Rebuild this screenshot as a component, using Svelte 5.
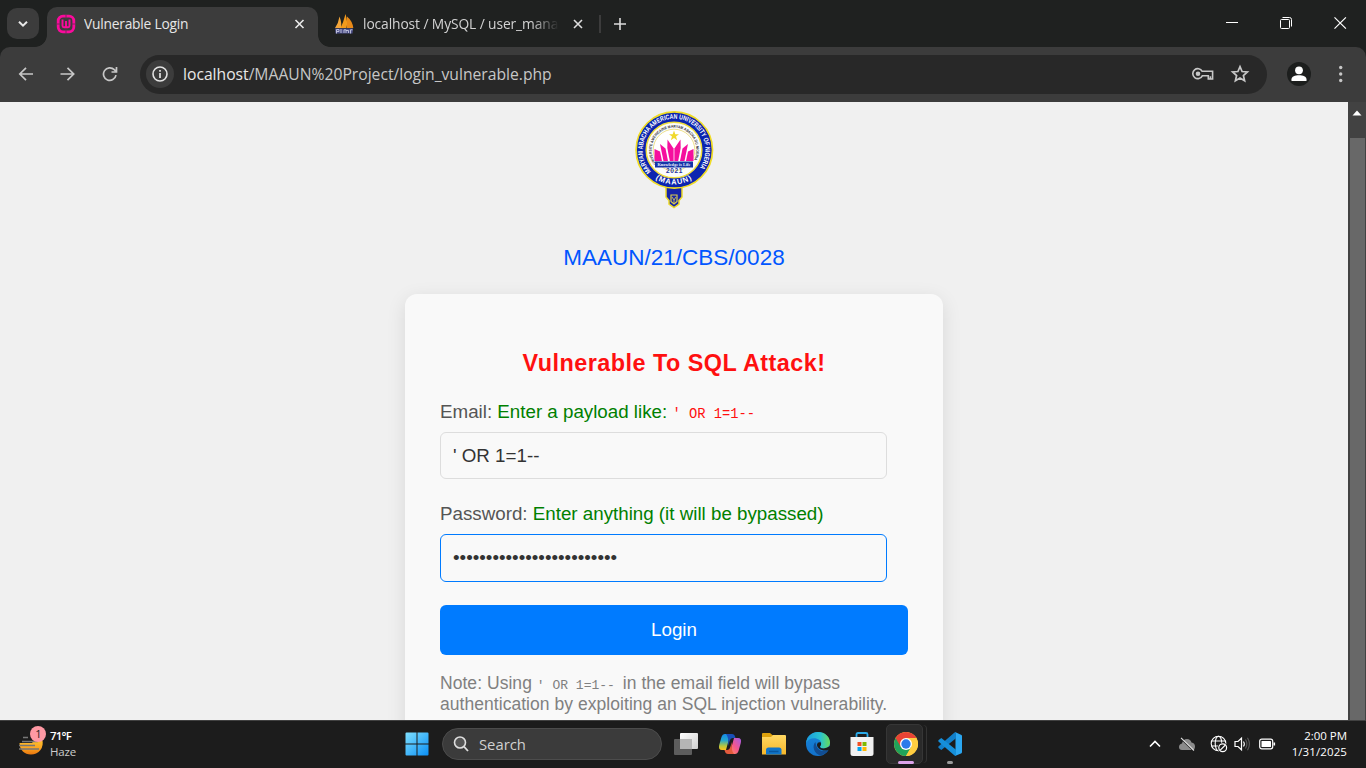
<script>
  const username = "' OR 1=1--";
  const dots = '•'.repeat(25);
</script>

<div class="screen">
  <header class="tabstrip">
    <button class="tab-search" aria-label="Search tabs">
      <svg width="12" height="12" viewBox="0 0 12 12"><path d="M2 3.7 6 7.7 10 3.7" fill="none" stroke="#e8e8e8" stroke-width="2" /></svg>
    </button>
    <div class="tab active">
      <svg class="fav" width="20" height="20" viewBox="0 0 20 20">
        <rect x="2.200" y="2.200" width="15.600" height="15.600" rx="4.800" fill="none" stroke="#fb0a9c" stroke-width="2.800" />
        <path d="M10 0V4.500M10 15.500V20M0 10H4.500M15.500 10H20" stroke="#6b2c55" stroke-width="0.9" />
        <path d="M6.500 5.500V11.800Q6.500 13.300 8 13.300H12Q13.500 13.300 13.500 11.800V5.500M10 7V12.500" fill="none" stroke="#fb0a9c" stroke-width="1.9" />
      </svg>
      <span class="tab-title t1">Vulnerable Login</span>
      <svg class="close" width="12" height="12" viewBox="0 0 12 12"><path d="M1.500 2 9.500 10M9.500 2 1.500 10" stroke="#ececec" stroke-width="1.6" /></svg>
    </div>
    <div class="tab idle">
      <svg class="fav2" width="20" height="20" viewBox="0 0 20 20">
        <path d="M1 14Q4.500 9 5.500 2.500Q8 9 7 14Z" fill="#f4a63a" />
        <path d="M6.500 14Q9.500 8 11.500 0Q14 8 12.500 14Z" fill="#f39a1c" />
        <path d="M13 14V2.500Q18.500 7 19.300 14Z" fill="#e98a18" />
        <path d="M1 14.500H19L18.500 19.500H1.500Z" fill="#4d5087" />
        <path d="M2.500 19.500V15.500H5V17.500H2.500M7 15V19M10 19V15.800H12V19M12 16.500H14.500V19M16.500 19.500V15.800H18.500" fill="none" stroke="#c4c6e0" stroke-width=".9" />
      </svg>
      <span class="tab-title t2">localhost / MySQL / user_manage</span>
      <svg class="close" width="12" height="12" viewBox="0 0 12 12"><path d="M2 2 10 10M10 2 2 10" stroke="#dedede" stroke-width="1.6" /></svg>
    </div>
    <i class="sep"></i>
    <svg class="plus" width="14" height="14" viewBox="0 0 14 14"><path d="M7 1V13M1 7H13" stroke="#dcdcdc" stroke-width="1.6" /></svg>
    <div class="wincontrols">
      <svg width="12" height="14" viewBox="0 0 12 14"><path d="M0 6.500H12" stroke="#fff" /></svg>
      <svg width="14" height="14" viewBox="0 0 14 14"><rect x="1.500" y="3.500" width="9" height="9" rx="1" fill="none" stroke="#fff" /><path d="M3.500 1.500H10.500Q12.500 1.500 12.500 3.500V10.500" fill="none" stroke="#fff" /></svg>
      <svg width="14" height="14" viewBox="0 0 14 14"><path d="M.5 1.300 11.900 12.700M11.900 1.300 .5 12.700" stroke="#fff" stroke-width="1.200" /></svg>
    </div>
  </header>

  <nav class="toolbar">
    <svg class="nav" width="16" height="16" viewBox="0 0 16 16"><path d="M15 8H2M8 1.800 1.800 8 8 14.200" fill="none" stroke="#c7c7c7" stroke-width="1.700" /></svg>
    <svg class="nav" width="16" height="16" viewBox="0 0 16 16"><path d="M.5 8H13.500M7.500 1.800 13.700 8 7.500 14.200" fill="none" stroke="#c7c7c7" stroke-width="1.700" /></svg>
    <svg class="nav" width="16" height="16" viewBox="0 0 16 16"><path d="M14 9.200A6.300 6.300 0 1 1 12.300 3.700L14.500 5.800M14.500 1V6H9.500" fill="none" stroke="#c7c7c7" stroke-width="1.700" /></svg>
    <div class="omnibox">
      <span class="info"><svg width="18" height="18" viewBox="0 0 18 18"><circle cx="9" cy="9" r="7" fill="none" stroke="#e3e3e3" stroke-width="1.600" /><path d="M9 8V13M9 5V6.700" stroke="#e3e3e3" stroke-width="1.700" /></svg></span>
      <span class="url"><b>localhost</b>/MAAUN%20Project/login_vulnerable.php</span>
      <svg class="key" width="22" height="14" viewBox="0 0 22 14"><path d="M10.200 4.300H20.600V12H16.300V8.800H10.300A5 5 0 1 1 10.200 4.300ZM18.400 9.300V12" fill="none" stroke="#c7c7c7" stroke-width="1.600" /><circle cx="6" cy="6.700" r="2.300" fill="#c7c7c7" /></svg>
      <svg class="star" width="20" height="20" viewBox="0 0 20 20"><path d="M10 2.600 12.100 7.500 17.400 8 13.400 11.500 14.600 16.800 10 14 5.400 16.800 6.600 11.500 2.600 8 7.900 7.500Z" fill="none" stroke="#c7c7c7" stroke-width="1.700" /></svg>
    </div>
    <svg class="profile" width="24" height="24" viewBox="0 0 24 24"><circle cx="12" cy="12" r="12" fill="#1c1e1d" /><circle cx="12" cy="8.300" r="3.900" fill="#fff" /><path d="M4.500 19V17.200C4.500 14.500 8 13.300 12 13.300S19.500 14.500 19.500 17.200V19Z" fill="#fff" /></svg>
    <svg class="menu" width="6" height="20" viewBox="0 0 6 20"><g fill="#c7c7c7"><circle cx="2.700" cy="3.500" r="1.700" /><circle cx="2.700" cy="10" r="1.700" /><circle cx="2.700" cy="16.500" r="1.700" /></g></svg>
  </nav>

  <div class="viewport">
    <main>
      <svg class="crest" width="80" height="100" viewBox="0 0 80 100">
        <defs>
          <path id="ring-top" d="M17.100 61.400A31.300 31.300 0 1 1 62.900 61.400" />
          <path id="ring-in" d="M22.200 53.400A22.300 22.300 0 1 1 57.800 53.400" />
          <path id="ring-bottom" d="M14 62.500A34.400 34.400 0 0 0 66 62.500" />
        </defs>
        <path d="M32 77H48V87L45 90.500V94L40 97.500 35 94V90.500L32 87Z" fill="#1724a8" stroke="#ecd928" stroke-width="1.500" />
        <path d="M37 85H43V91.500L40 94 37 91.500Z" fill="none" stroke="#d9cb4c" stroke-width="1.200" />
        <path d="M38 87 40 90 42 87M40 90V93" fill="none" stroke="#d9cb4c" stroke-width=".9" />
        <circle cx="40.300" cy="40" r="38.200" fill="#0b24b0" stroke="#f0dc25" stroke-width="1.700" />
        <circle cx="40" cy="40" r="27.800" fill="#fbfbfb" stroke="#efdd3c" stroke-width="1.500" />
        <circle cx="40" cy="40" r="20.800" fill="#fff" stroke="#e6d45d" stroke-width=".7" />
        <text class="crest-ring" textLength="140" lengthAdjust="spacingAndGlyphs"><textPath href="#ring-top" textLength="140" lengthAdjust="spacingAndGlyphs">MARYAM ABACHA AMERICAN UNIVERSITY OF NIGERIA</textPath></text>
        <text class="crest-inner"><textPath href="#ring-in" textLength="94" lengthAdjust="spacingAndGlyphs">UNIVERSITE AMERICAINE MARYAM ABACHA DU NIGERIA</textPath></text>
        <text class="crest-name"><textPath href="#ring-bottom" startOffset="50%" text-anchor="middle">(MAAUN)</textPath></text>
        <path d="M40 20.500 41.300 24.200H45L42 26.500 43.200 30.300 40 28 36.800 30.300 38 26.500 35 24.200H38.700Z" fill="#f0d92b" />
        <g fill="#f50f9e">
          <path d="M20.500 39 26 41.500 28 51H20.500Z" /><path d="M26 34 31.500 38.500 34 51H29.500Z" />
          <path d="M33.500 29.500 39.600 38.500V51H35.800L33.300 38Z" /><path d="M46.500 29.500 40.400 38.500V51H44.200L46.700 38Z" />
          <path d="M54 34 48.500 38.500 46 51H50.500Z" /><path d="M59.500 39 54 41.500 52 51H59.500Z" />
        </g>
        <rect x="21" y="51.500" width="38" height="6" fill="#1535a8" />
        <text class="crest-banner" x="40" y="56" text-anchor="middle">Knowledge is Life</text>
        <text class="crest-year" x="40.500" y="63" text-anchor="middle">2021</text>
      </svg>
      <p class="matric">MAAUN/21/CBS/0028</p>
      <section class="card">
        <h2>Vulnerable To SQL Attack!</h2>
        <div class="label">Email: <span>Enter a payload like: <code>' OR 1=1--</code></span></div>
        <div class="field">{username}</div>
        <div class="label second">Password: <span>Enter anything (it will be bypassed)</span></div>
        <div class="field focus">{dots}</div>
        <button class="login">Login</button>
        <p class="note">Note: Using <code>' OR 1=1--</code> in the email field will bypass<br />authentication by exploiting an SQL injection vulnerability.</p>
      </section>
    </main>
    <aside class="scrollbar">
      <svg width="10" height="6" viewBox="0 0 10 6"><path d="M.5 5.500 5 .5 9.500 5.500Z" fill="#fff" /></svg>
      <div class="thumb"></div>
    </aside>
  </div>

  <footer class="taskbar">
    <div class="weather">
      <svg width="32" height="32" viewBox="0 0 32 32">
        <defs><linearGradient id="sun" x1="0" y1="0" x2="0" y2="1"><stop offset="0" stop-color="#ffc52e" /><stop offset=".55" stop-color="#fba622" /><stop offset="1" stop-color="#e8760f" /></linearGradient></defs>
        <path d="M4.500 15H17L20 11H27A11.500 11.500 0 0 1 15.500 26.500C10 26.500 4.500 22 4.500 15Z" fill="url(#sun)" />
        <path d="M8 9.500H13M7 13.500H23M4 17.500H20M4 21H24" stroke="#777" stroke-width="1.700" />
        <circle cx="23" cy="6" r="8" fill="#ff99a4" />
        <text x="23.500" y="10" text-anchor="middle" class="badge">1</text>
      </svg>
      <div><strong>71°F</strong><span>Haze</span></div>
    </div>

    <div class="dock">
      <svg class="start" width="24" height="24" viewBox="0 0 24 24"><defs><linearGradient id="win" x1="0" y1="0" x2="1" y2="1"><stop offset="0" stop-color="#7fe0ff" /><stop offset="1" stop-color="#0a8ff5" /></linearGradient></defs><path d="M.5 1.500Q.5.500 1.500.500H11.500V11.500H.5ZM12.500.500H22.500Q23.500.500 23.500 1.500V11.500H12.500ZM.5 12.500H11.500V23.500H1.500Q.5 23.500.5 22.500ZM12.500 12.500H23.500V22.500Q23.500 23.500 22.500 23.500H12.500Z" fill="url(#win)" /></svg>
      <div class="search">
        <svg width="16" height="16" viewBox="0 0 16 16"><circle cx="7" cy="6.500" r="5.500" fill="#555" stroke="#dedede" stroke-width="1.600" /><path d="M11 10.700 15 15" stroke="#dedede" stroke-width="1.800" /></svg>
        <span>Search</span>
      </div>
      <div class="slot"><svg width="24" height="24" viewBox="0 0 24 24"><defs><linearGradient id="tv" x1="0" y1="0" x2="1" y2="1"><stop stop-color="#fff" /><stop offset="1" stop-color="#cfcfcf" /></linearGradient></defs><rect x="6" y="1" width="18" height="16" rx="1" fill="url(#tv)" /><rect y="7" width="18" height="16" rx="1" fill="#5d5d5d" /><path d="M6 7H18V17H6Z" fill="#b5b5b5" /></svg></div>
      <div class="slot"><svg width="24" height="24" viewBox="0 0 24 24">
        <defs><linearGradient id="cl" x1="0" y1="0" x2="0" y2="1"><stop stop-color="#168be9" /><stop offset=".4" stop-color="#25a8cc" /><stop offset=".75" stop-color="#b7c73d" /><stop offset="1" stop-color="#ffc21c" /></linearGradient><linearGradient id="cr" x1="1" y1="0" x2="0" y2="1"><stop stop-color="#a35ce8" /><stop offset=".5" stop-color="#f5568d" /><stop offset="1" stop-color="#ff9c53" /></linearGradient></defs>
        <path d="M14 2H7Q4.500 2 3.500 5L1.200 13Q0 18 4 18H8L11 7Q12 3 14 2Z" fill="url(#cl)" />
        <path d="M10 22H17Q19.500 22 20.500 19L22.800 11Q24 6 20 6H16L13 17Q12 21 10 22Z" fill="url(#cr)" />
        <path d="M8 2H14Q16.500 2 17.200 5L17.600 6H15Q12.500 6 11.700 9L10 14Q11 5 8 2Z" fill="#194fb7" />
        <path d="M16 22H10Q7.500 22 6.800 19L6.400 18H9Q11.500 18 12.300 15L14 10Q13 19 16 22Z" fill="#e45b3d" />
      </svg></div>
      <div class="slot"><svg width="26" height="24" viewBox="0 0 26 24"><defs><linearGradient id="fo" x1="0" y1="0" x2="0" y2="1"><stop stop-color="#ffd863" /><stop offset="1" stop-color="#f6b72a" /></linearGradient></defs><path d="M1 2Q1 1 2 1H9L12 3.500V7H1Z" fill="#dda10c" /><path d="M1 5H10L12 3H24Q25 3 25 4V22.500H1Z" fill="url(#fo)" /><path d="M5 22.500V18Q5 15.500 7.500 15.500H18Q20.500 15.500 20.500 18V22.500Z" fill="#1175c9" /><path d="M8 19.500H17.500" stroke="#07569f" stroke-width="1.500" /></svg></div>
      <div class="slot"><svg width="24" height="24" viewBox="0 0 24 24">
        <defs><linearGradient id="ed" x1="0" y1="0" x2="1" y2="0"><stop stop-color="#199be0" /><stop offset=".6" stop-color="#29c3d0" /><stop offset="1" stop-color="#68db58" /></linearGradient><linearGradient id="eb" x1="0" y1="0" x2="0" y2="1"><stop stop-color="#1784d8" /><stop offset="1" stop-color="#1272cc" /></linearGradient></defs>
        <circle cx="12" cy="12" r="12" fill="url(#eb)" />
        <path d="M.1 11C.8 4 6 0 12 0 19 0 24 5 24 10.500 24 14 21.300 16.500 18 16.500 15.500 16.500 14 15.500 14 14.500 14 13.800 15.300 13.200 15.300 11.500 15.300 8.500 12 6.200 8 6.200 4.500 6.200 1.500 8 .1 11Z" fill="url(#ed)" />
        <path d="M9.500 10C5.500 13.500 8 22.500 15 23.300 18.500 22.500 21.500 20 22.700 17.500 17 21 10 18.500 9.500 10Z" fill="#124d92" />
        <path d="M14 14.500C14 17 19.500 17.300 24 14V17.200C18.500 20.500 10.500 17 11 12.500Q11.500 9.500 15 10.500 15.500 12.500 14 14.500Z" fill="#1c1c1c" />
      </svg></div>
      <div class="slot"><svg width="24" height="26" viewBox="0 0 24 26"><path d="M6.500 6V3.500Q6.500 2 8 2H16Q17.500 2 17.500 3.500V6" fill="none" stroke="#29a9e8" stroke-width="1.800" /><path d="M.5 6H23.500V22.500Q23.500 25 21 25H3Q.5 25 .5 22.500Z" fill="#f1f1f1" /><path d="M7.500 11H11.500V15H7.500Z" fill="#f25022" /><path d="M12.500 11H16.500V15H12.500Z" fill="#7fba00" /><path d="M7.500 16H11.500V20H7.500Z" fill="#00a4ef" /><path d="M12.500 16H16.500V20H12.500Z" fill="#ffb900" /></svg></div>
      <div class="slot running"><svg width="24" height="24" viewBox="0 0 24 24"><circle cx="12" cy="12" r="12" fill="#ffcd40" /><path d="M12 12 1.610 6A12 12 0 0 0 12 24L17.200 15Z" fill="#20a35a" /><path d="M1.610 6A12 12 0 0 1 22.390 6H12L6.800 15Z" fill="#e94335" /><path d="M12 6H22.400A12 12 0 0 1 12 24L17.200 15Z" fill="#ffcd40" /><circle cx="12" cy="12" r="6" fill="#fff" /><circle cx="12" cy="12" r="4.700" fill="#2b7bea" /></svg><i></i></div>
      <div class="slot idle-app"><svg width="24" height="24" viewBox="0 0 24 24"><path d="M17.500.3 23 2.700Q24 3.100 24 4V20Q24 21 23 21.500L17.500 23.700Z" fill="#2ba7f1" /><path d="M18 0V6.200L3.300 18 .4 15.700V14.500L16.500.5Z" fill="#117fc9" /><path d="M18 24V17.800L3.300 6 .4 8.300V9.500L16.500 23.500Z" fill="#168fd9" /></svg><i></i></div>
    </div>

    <div class="tray">
      <svg width="12" height="8" viewBox="0 0 12 8"><path d="M1 6.500 6 1.500 11 6.500" fill="none" stroke="#fff" stroke-width="1.600" /></svg>
      <svg class="cloud" width="18" height="14" viewBox="0 0 18 14"><path d="M4 13Q1 13 1 10 1 7 4 6.500 5 2 9 2 12.500 2 13.500 5.500 17 6 17 9.500 17 13 14 13Z" fill="#8b8b8b" /><path d="M2.500 1.300 15.200 13.500" stroke="#1c1c1c" stroke-width="1.300" /><path d="M3 .8 16 13.500" stroke="#e2e2e2" stroke-width="1.100" /></svg>
      <svg class="globe" width="18" height="18" viewBox="0 0 18 18"><g fill="none" stroke="#fff" stroke-width="1.100"><circle cx="8.500" cy="8.500" r="7.300" /><ellipse cx="8.500" cy="8.500" rx="3.300" ry="7.300" /><path d="M1.500 6H15.500M1.500 11H15.500" /></g><circle cx="12.700" cy="12.700" r="5.200" fill="#1c1c1c" /><circle cx="12.700" cy="12.700" r="3.900" fill="none" stroke="#fff" stroke-width="1.200" /><path d="M10 15.400 15.400 10" stroke="#fff" stroke-width="1.200" /></svg>
      <svg class="speaker" width="17" height="16" viewBox="0 0 17 16"><path d="M1 5.500H4L7.500 2.200V13.800L4 10.500H1Z" fill="none" stroke="#fff" stroke-width="1.200" /><path d="M9.500 5.500Q11.200 8 9.500 10.500" fill="none" stroke="#fff" stroke-width="1.100" /><path d="M11.500 3.500Q14.300 8 11.500 12.500M13.500 1.700Q17.300 8 13.500 14.300" fill="none" stroke="#5c5c5c" stroke-width="1.100" /></svg>
      <svg class="battery" width="17" height="12" viewBox="0 0 17 12"><rect x=".7" y="1.200" width="13" height="9.600" rx="2" fill="none" stroke="#fff" stroke-width="1.200" /><rect x="2.500" y="3" width="9.500" height="6" rx=".6" fill="#fff" /><path d="M15.300 4.500V7.500" stroke="#fff" stroke-width="1.600" /></svg>
      <div class="clock"><span class="time">2:00 PM</span><span class="date">1/31/2025</span></div>
    </div>
  </footer>
</div>

<style>
  :global(body) { margin: 0; overflow: hidden; }
  .screen { width: 1366px; height: 768px; overflow: hidden; display: flex; flex-direction: column; font-family: 'Open Sans', 'Noto Sans', sans-serif; background: #1f2120; }
  .screen * { box-sizing: border-box; }
  svg { display: block; flex: none; }
  button { border: 0; padding: 0; }

  .tabstrip { height: 47px; flex: none; display: flex; align-items: center; padding-left: 7px; background: #1f2120; }
  .tab-search { width: 32px; height: 31px; border-radius: 10px; background: #3c3c3c; display: grid; place-items: center; }
  .tab { display: flex; align-items: center; height: 40px; }
  .active { position: relative; width: 271px; margin: 7px 0 0 8px; padding: 0 12px 7px 9px; border-radius: 10px 10px 0 0; background: #3c3c3c; }
  .active::before, .active::after { content: ''; position: absolute; bottom: 0; width: 12px; height: 12px; }
  .active::before { left: -12px; background: radial-gradient(circle at 0 0, transparent 11.5px, #3c3c3c 12.2px); }
  .active::after { right: -12px; background: radial-gradient(circle at 100% 0, transparent 11.5px, #3c3c3c 12.2px); }
  .tab-title { color: #e6e6e6; font-size: 13.8px; line-height: 20px; white-space: nowrap; overflow: hidden; }
  .t1 { margin-left: 8px; flex: 1; letter-spacing: -.23px; }
  .idle { width: 268px; padding: 0 2px 0 16px; }
  .t2 { width: 197px; margin: 0 13px 0 9px; color: #d2d2d2; letter-spacing: -.1px; mask-image: linear-gradient(90deg, #000 86%, transparent 100%); }
  .sep { width: 2px; height: 18px; margin-left: 13px; background: #3c3c3c; }
  .plus { margin-left: 12px; }
  .wincontrols { display: flex; gap: 41px; margin: 0 18px 1px auto; }

  .toolbar { height: 55px; flex: none; display: flex; align-items: center; padding: 0 0 1px 18px; background: #3c3c3c; border-radius: 10px 10px 0 0; }
  .nav { margin-right: 26px; }
  .omnibox { width: 1127px; height: 39px; margin-left: -4px; padding-left: 6px; border-radius: 20px; background: #282828; display: flex; align-items: center; }
  .info { width: 28px; height: 28px; border-radius: 50%; display: grid; place-items: center; background: #3c3c3c; }
  .url { margin-left: 9px; color: #c7c7c7; font-size: 15.7px; letter-spacing: -.01px; white-space: nowrap; }
  .url b { font-weight: 400; color: #e8e8e8; }
  .key { margin-left: auto; }
  .star { margin: 0 17px 0 16px; }
  .profile { margin-left: 20px; }
  .menu { margin-left: 27px; }

  .viewport { height: 618px; flex: none; display: flex; overflow: hidden; }
  main { width: 1348px; height: 618px; overflow: hidden; padding-top: 8px; display: flex; flex-direction: column; align-items: center; background: #f0f0f0; font-family: 'Liberation Sans', Arial, sans-serif; }
  .scrollbar { width: 18px; display: flex; flex-direction: column; align-items: center; background: #424242; padding-top: 8px; }
  .thumb { width: 15px; margin-top: 22px; flex: 1; background: #686868; }
  .crest-ring { font: bold 6.800px 'Liberation Sans', sans-serif; fill: #fff; }
  .crest-inner { font: bold 3.900px 'Liberation Sans', sans-serif; fill: #34343c; }
  .crest-name { font: bold 7.500px 'Liberation Sans', sans-serif; fill: #fff; letter-spacing: .9px; }
  .crest-banner { font: bold 4.300px 'Liberation Serif', serif; fill: #eef; }
  .crest-year { font: bold 6.500px 'Liberation Sans', sans-serif; fill: #26349e; letter-spacing: .6px; }
  .matric { margin: 35px 0 0; font-size: 22.5px; line-height: 26px; color: #0056ff; }
  .card { width: 538px; height: 470px; flex: none; margin-top: 23px; padding: 55px 35px 0; border-radius: 12px; background: #f9f9f9; box-shadow: 0 5px 19px rgba(0, 0, 0, .1); }
  h2 { margin: 0; text-align: center; font-size: 23.4px; line-height: 28px; letter-spacing: .48px; color: #ff1010; }
  .label { height: 21px; margin-top: 24px; font-size: 18.75px; line-height: 21px; color: #555; white-space: nowrap; }
  .label span { color: #008000; }
  code { font-family: 'Liberation Mono', monospace; line-height: 0; }
  .label code { font-size: 13.75px; color: #ff1010; }
  .field { width: 447px; height: 47px; margin-top: 10px; padding: 0 12px; border: 1px solid #ddd; border-radius: 6px; font-size: 18.75px; line-height: 45px; color: #333; }
  .second { margin-top: 24px; }
  .focus { height: 48px; border-color: #007bff; }
  .login { display: block; width: 468px; height: 50px; margin-top: 23px; border-radius: 6px; background: #007bff; color: #fff; font: 18.75px/50px 'Liberation Sans', sans-serif; }
  .note { margin: 18px 0 0; font-size: 17.5px; line-height: 21px; letter-spacing: .045px; color: #808080; white-space: nowrap; }
  .note code { font-size: 13px; margin-right: 3px; letter-spacing: 0; }

  .taskbar { position: relative; height: 48px; flex: none; display: flex; align-items: center; padding-bottom: 1px; background: #1c1c1c; border-top: 1px solid #414141; color: #fff; }
  .weather { display: flex; width: 405px; padding-left: 15px; font-size: 11.5px; line-height: 16px; }
  .weather svg { overflow: visible; }
  .weather > div { display: flex; flex-direction: column; margin: 0 0 0 3px; }
  .weather strong { font-weight: 600; letter-spacing: -.8px; }
  .weather span { color: #ccc; letter-spacing: -.2px; }
  .badge { font: 11px 'Open Sans', sans-serif; fill: #222; }
  .dock { display: flex; align-items: center; }
  .search { width: 220px; height: 32px; margin: 0 2px 0 13px; padding-left: 10px; display: flex; align-items: center; gap: 10px; border: 1px solid #4c4c4c; border-radius: 16px; background: #3b3b3b; color: #d0d0d0; font-size: 14.8px; }
  .slot { position: relative; width: 44px; height: 40px; display: grid; place-items: center; }
  .running::before { content: ''; position: absolute; inset: 0 5px 0 2px; width: 35px; border: 1px solid #363636; border-radius: 5px; background: #2a2a2a; box-shadow: 4px 0 0 -1px #1c1c1c, 5px 0 0 -1px #333; }
  .running svg { position: relative; }
  .slot i { position: absolute; bottom: 0; width: 6px; height: 3px; border-radius: 2px; background: #9b9b9b; }
  .running i { width: 16px; background: #dca3ea; }
  .tray { margin-left: auto; padding-right: 19px; display: flex; align-items: center; }
  .cloud { margin-left: 17px; }
  .globe { margin-left: 14px; }
  .speaker { margin-left: 6px; }
  .battery { margin-left: 8px; }
  .clock { width: 71px; display: flex; flex-direction: column; align-items: flex-end; font-size: 11.500px; line-height: 16px; }
  .time { letter-spacing: -.05px; }
  .date { letter-spacing: .1px; }
</style>
